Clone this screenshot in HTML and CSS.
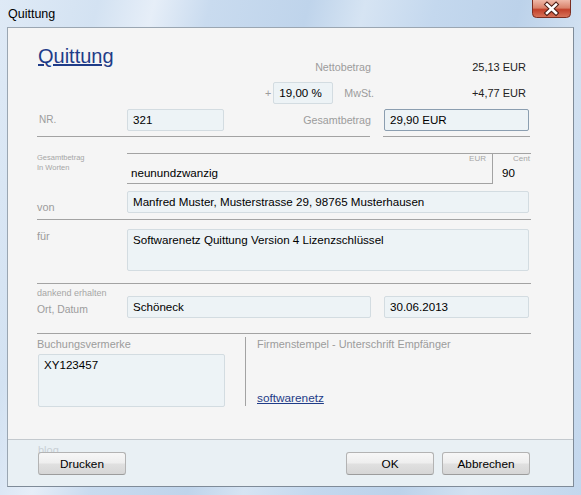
FILE: index.html
```html
<!DOCTYPE html>
<html lang="de">
<head>
<meta charset="utf-8">
<title>Quittung</title>
<link rel="stylesheet" href="styles.css">
</head>
<body>
<div class="window">
  <div class="titlebar">
    <span class="title">Quittung</span>
    <div class="close">
      <svg width="39" height="18" viewBox="0 0 39 18">
        <defs>
          <linearGradient id="cg" x1="0" y1="0" x2="0" y2="1">
            <stop offset="0" stop-color="#efb9a9"/>
            <stop offset="0.45" stop-color="#d9826b"/>
            <stop offset="0.55" stop-color="#c2412a"/>
            <stop offset="1" stop-color="#d8755c"/>
          </linearGradient>
        </defs>
        <path d="M0.5 0 V13.5 Q0.5 17.5 4.5 17.5 H34.5 Q38.5 17.5 38.5 13.5 V0" fill="url(#cg)" stroke="#7b2e22"/>
        <path d="M15 4.5 L24 13 M24 4.5 L15 13" stroke="#4a1c14" stroke-width="4.6" stroke-linecap="square"/>
        <path d="M15 4.5 L24 13 M24 4.5 L15 13" stroke="#ffffff" stroke-width="2.6" stroke-linecap="square"/>
      </svg>
    </div>
  </div>
  <div class="client">
    <div class="form">
      <div class="grid row1">
        <a class="heading" href="#">Quittung</a>
        <span class="label c2 end">Nettobetrag</span>
        <span class="value c4 end">25,13 EUR</span>
      </div>
      <div class="grid row2">
        <div class="c2 mwst">
          <span class="label plus">+</span>
          <div class="field w60">19,00 %</div>
          <span class="label mw">MwSt.</span>
        </div>
        <span class="value c4 end">+4,77 EUR</span>
      </div>
      <div class="grid row3">
        <span class="label nr">NR.</span>
        <div class="c2 split">
          <div class="field w97">321</div>
          <span class="label">Gesamtbetrag</span>
        </div>
        <div class="field c4 w145 active">29,90 EUR</div>
      </div>
      <div class="grid sep">
        <div class="line left"></div>
        <div class="line c4"></div>
      </div>
      <div class="grid worten">
        <div class="tiny">Gesamtbetrag<br>In Worten</div>
        <div class="wbox">
          <div class="weur">
            <div class="tiny r">EUR</div>
            <div class="wtext">neunundzwanzig</div>
          </div>
          <div class="wcent">
            <div class="tiny cent">Cent</div>
            <div class="wtext ct">90</div>
          </div>
        </div>
      </div>
      <div class="grid vonrow">
        <span class="label lab11 von">von</span>
        <div class="field span3">Manfred Muster, Musterstrasse 29, 98765 Musterhausen</div>
      </div>
      <div class="line full l1"></div>
      <div class="grid fuerrow">
        <span class="label lab11">für</span>
        <div class="field span3 multi">Softwarenetz Quittung Version 4 Lizenzschlüssel</div>
      </div>
      <div class="line full l2"></div>
      <div class="grid ortrow">
        <div class="ortlab">
          <div class="small9">dankend erhalten</div>
          <div class="label ort">Ort, Datum</div>
        </div>
        <div class="field c2 fm">Schöneck</div>
        <div class="field c4 w145 fm">30.06.2013</div>
      </div>
      <div class="line full l3"></div>
      <div class="bottom">
        <div class="bleft">
          <div class="label lab11">Buchungsvermerke</div>
          <div class="field notes">XY123457</div>
        </div>
        <div class="bright">
          <div class="label lab11">Firmenstempel - Unterschrift Empfänger</div>
          <a class="link" href="#">softwarenetz</a>
        </div>
      </div>
    </div>
    <div class="footer">
      <div class="blog">blog</div>
      <div class="buttons">
        <button class="btn">Drucken</button>
        <button class="btn push">OK</button>
        <button class="btn">Abbrechen</button>
      </div>
    </div>
  </div>
</div>
</body>
</html>
```

FILE: styles.css
```css
* { box-sizing: border-box; }
html, body { margin: 0; padding: 0; }
body {
  width: 581px;
  height: 495px;
  overflow: hidden;
  font-family: "Liberation Sans", Arial, sans-serif;
  background: #c9dbee;
}
.window {
  width: 581px;
  height: 495px;
  display: flex;
  flex-direction: column;
  padding: 0 7px 8px 7px;
  background:
    linear-gradient(104deg, #dfeaf6 0%, #d3e2f2 14%, #e6eef8 22%, #c9dbef 30%, #bfd4eb 44%, #d6e4f3 52%, #c4d8ee 62%, #bcd2ea 74%, #d2e1f1 84%, #c3d7ed 100%);
}
.titlebar {
  height: 27px;
  display: flex;
  justify-content: space-between;
  align-items: flex-start;
}
.title {
  font-size: 12.5px;
  line-height: 28px;
  color: #000;
  padding-left: 1px;
}
.close {
  width: 39px;
  height: 18px;
  margin-right: 3px;
}
.close svg { display: block; }
.client {
  flex: 1;
  display: flex;
  flex-direction: column;
  border: 1px solid #7f8b98;
  border-top-color: #9aa6b2;
  border-left-color: #9aa6b2;
  background: #f5f5f5;
}
.form {
  flex: 1;
  padding: 16px 0 0 29px;
}
.grid {
  display: grid;
  grid-template-columns: 90px 244px 13px 147px;
  width: 494px;
}
.c2 { grid-column: 2; }
.c4 { grid-column: 4; }
.end { justify-self: end; }
.label {
  font-size: 10.7px;
  color: #9c9c9c;
  line-height: 14px;
  white-space: nowrap;
}
.lab11 { font-size: 10.9px; }
.value {
  font-size: 11px;
  color: #222;
  line-height: 14px;
  white-space: nowrap;
  margin-right: 5px;
}
.field {
  height: 22px;
  background: #edf3f6;
  border: 1px solid #d3dce1;
  border-radius: 2px;
  font-size: 11.6px;
  line-height: 20px;
  color: #000;
  padding: 0 5px;
  white-space: nowrap;
}
.active { border-color: #8b9eb0; }
.w60 { width: 60px; }
.w97 { width: 97px; }
.w145 { width: 145px; }

.row1 { height: 30px; }
.heading {
  grid-column: 1;
  grid-row: 1;
  font-size: 20px;
  line-height: 24px;
  color: #1f3c88;
  text-decoration: underline;
  white-space: nowrap;
  margin-left: 1px;
  align-self: start;
}
.row1 .label, .row1 .value { align-self: end; grid-row: 1; }

.row2 { margin-top: 8px; height: 22px; align-items: center; }
.mwst {
  display: flex;
  justify-content: flex-end;
  align-items: center;
  margin-right: -3px;
}
.plus { margin-right: 2px; }
.mw { margin-left: 11px; }

.row3 { margin-top: 5px; height: 22px; align-items: center; }
.nr { font-size: 10px; padding-left: 2px; }
.split {
  display: flex;
  justify-content: space-between;
  align-items: center;
}
.sep { margin-top: 5px; height: 1px; }
.line { height: 1px; background: #a3a3a3; }
.sep .left { grid-column: 1 / 3; margin-right: 1px; }
.sep .c4 { margin-left: -1px; margin-right: 1px; }

.worten { margin-top: 16px; }
.tiny {
  font-size: 7.5px;
  line-height: 10px;
  color: #a6a6a6;
  white-space: nowrap;
}
.wbox {
  grid-column: 2 / 5;
  display: flex;
  border-top: 1px solid #a3a3a3;
}
.weur {
  flex: 1;
  border-right: 1px solid #a3a3a3;
  border-bottom: 1px solid #a3a3a3;
  height: 30px;
}
.weur .r {
  font-size: 8px;
  line-height: 9px;
  text-align: right;
  padding-right: 6px;
}
.wtext {
  font-size: 11.6px;
  line-height: 20px;
  padding-left: 4px;
  color: #000;
}
.wcent {
  width: 38px;
  overflow: hidden;
}
.cent {
  font-size: 8px;
  line-height: 9px;
  padding-left: 20px;
}
.ct { padding-left: 9px; }

.vonrow { margin-top: 7px; height: 22px; }
.von { margin-top: 10px; line-height: 12px; }
.span3 { grid-column: 2 / 5; margin-right: 2px; }
.l1 { width: 494px; margin-top: 6px; }
.fuerrow { margin-top: 9px; }
.multi {
  height: 42px;
  line-height: 14px;
  padding-top: 3px;
}
.l2 { width: 494px; margin-top: 12px; }
.ortrow { height: 34px; }
.ortlab { grid-column: 1; }
.small9 {
  font-size: 9px;
  line-height: 12px;
  color: #a6a6a6;
  margin-top: 3px;
  white-space: nowrap;
}
.ort { font-size: 10.4px; margin-top: 4px; }
.fm { margin-top: 12px; }
.ortrow .c4 { margin-right: 2px; }
.l3 { width: 494px; margin-top: 15px; }

.bottom {
  display: grid;
  grid-template-columns: 208px 286px;
  margin-top: 3px;
  width: 494px;
}
.notes {
  width: 187px;
  height: 53px;
  margin-top: 3px;
  margin-left: 1px;
  line-height: 14px;
  padding-top: 3px;
}
.bright {
  border-left: 1px solid #a3a3a3;
  height: 69px;
  padding-left: 11px;
  align-self: start;
  display: flex;
  flex-direction: column;
  align-items: flex-start;
}
.link {
  margin-top: 40px;
  font-size: 11.8px;
  line-height: 14px;
  color: #1f3c88;
  text-decoration: underline;
}

.footer {
  height: 47px;
  border-top: 1px solid #c3c9ce;
  background: #e9f0f4;
  padding: 4px 43px 0 30px;
}
.blog {
  font-size: 11px;
  line-height: 12px;
  color: #c8cfd5;
}
.buttons {
  display: flex;
  gap: 8px;
  margin-top: -4px;
}
.btn {
  width: 88px;
  height: 23px;
  border: 1px solid #b3b3b3;
  border-bottom-color: #9c9c9c;
  border-radius: 3px;
  background: linear-gradient(#f7f7f7 0%, #eeeeee 48%, #e0e0e0 52%, #d6d6d6 100%);
  font-family: "Liberation Sans", Arial, sans-serif;
  font-size: 11.8px;
  color: #000;
  padding: 0;
}
.push { margin-left: auto; }
```
